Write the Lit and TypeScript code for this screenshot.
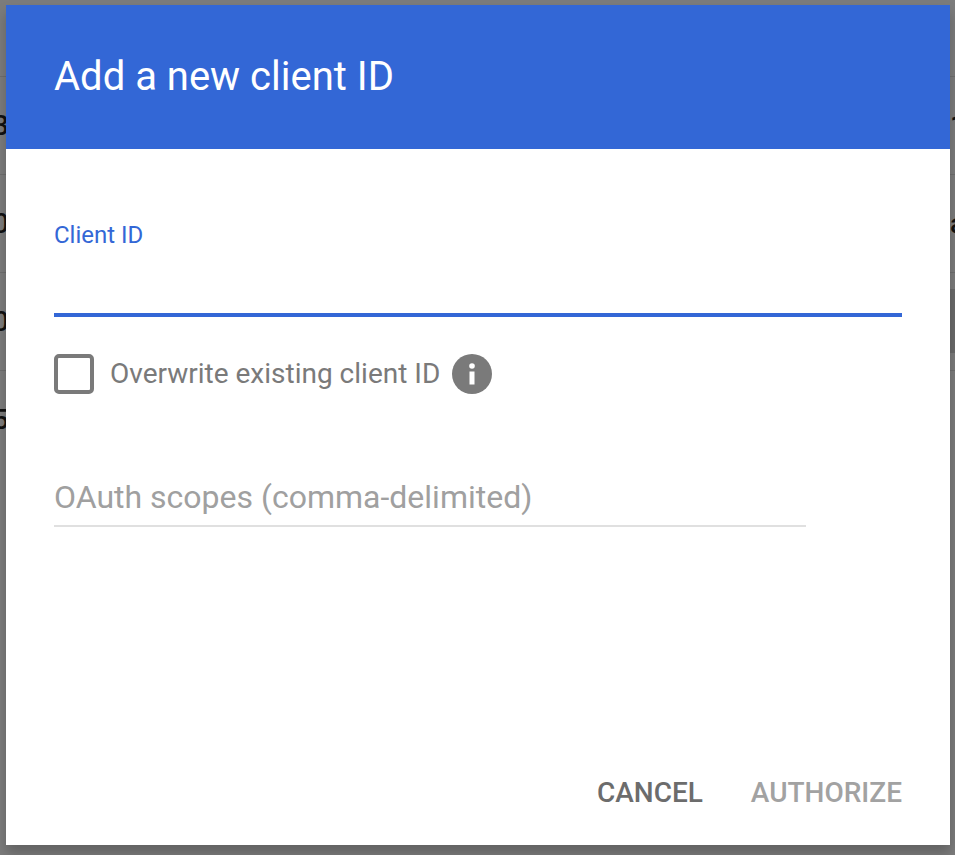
import { LitElement, html, css } from "lit";
import { customElement } from "lit/decorators.js";

@customElement("app-root")
export class AppRoot extends LitElement {
  static styles = css`
    :host { display: block; position: relative; width: 955px; height: 855px; overflow: hidden; font-family: Roboto, "Liberation Sans", sans-serif; background: #7c7c7c; }
    .back { display: flex; flex-direction: column; padding-top: 76px; }
    .row { height: 97px; border-top: 1px solid #6e6e6e; display: flex; align-items: center; justify-content: space-between; font-size: 28px; font-weight: 500; color: #111; }
    .l { margin-left: -7px; width: 13px; overflow: hidden; white-space: nowrap; letter-spacing: -2px; }
    .r { margin-right: -10px; width: 15px; overflow: hidden; white-space: nowrap; }
    .shade { position: absolute; right: 0; top: 289px; width: 5px; height: 64px; background: #6a6a6a; }
    .overlay { position: absolute; inset: 0; padding: 5px 5px 10px 6px; display: flex; box-sizing: border-box; }
    .dialog { flex: 1; background: #fff; display: flex; flex-direction: column; box-shadow: 0 8px 12px rgba(0, 0, 0, 0.22); }
    header { height: 144px; background: #3367d6; color: #fff; font-size: 40px; line-height: 144px; padding-left: 48px; flex: none; }
    .body { flex: 1; padding: 72px 48px 0 48px; display: flex; flex-direction: column; }
    .label { color: #3367d6; font-size: 24px; line-height: 28px; }
    .line { height: 4px; background: #3367d6; margin-top: 64px; }
    .check { display: flex; align-items: center; margin-top: 37px; height: 40px; }
    .box { width: 40px; height: 40px; box-sizing: border-box; border: 4px solid #7a7a7a; border-radius: 5px; flex: none; }
    .cl { color: #7a7a7a; font-size: 28px; line-height: 38px; margin-left: 16px; }
    .info { margin-left: 12px; flex: none; display: block; }
    .scope { width: 752px; margin-top: 82px; border-bottom: 2px solid #e0e0e0; height: 49px; color: #a0a0a0; font-size: 32px; line-height: 43px; white-space: nowrap; }
    footer { display: flex; justify-content: flex-end; gap: 48px; padding: 0 48px 36px; font-size: 28px; font-weight: 500; line-height: 32px; }
    .cancel { color: #6c6c6c; }
    .auth { color: #a2a2a2; }
  `;

  render() {
    return html`
      <div class="back">
        <div class="row"><span class="l">3:</span><span class="r">1</span></div>
        <div class="row"><span class="l">0</span><span class="r">a</span></div>
        <div class="row"><span class="l">0</span><span class="r">~</span></div>
        <div class="row"><span class="l">5</span><span class="r"></span></div>
      </div>
      <div class="shade"></div>
      <div class="overlay">
        <div class="dialog">
          <header>Add a new client ID</header>
          <div class="body">
            <div class="label">Client ID</div>
            <div class="line"></div>
            <div class="check">
              <div class="box"></div>
              <span class="cl">Overwrite existing client ID</span>
              <svg class="info" width="40" height="40" viewBox="0 0 40 40">
                <circle cx="20" cy="20" r="20" fill="#7a7a7a"></circle>
                <rect x="17.5" y="17.5" width="5" height="13" fill="#fff"></rect>
                <circle cx="20" cy="12" r="2.8" fill="#fff"></circle>
              </svg>
            </div>
            <div class="scope">OAuth scopes (comma-delimited)</div>
          </div>
          <footer>
            <span class="cancel">CANCEL</span>
            <span class="auth">AUTHORIZE</span>
          </footer>
        </div>
      </div>
    `;
  }
}
